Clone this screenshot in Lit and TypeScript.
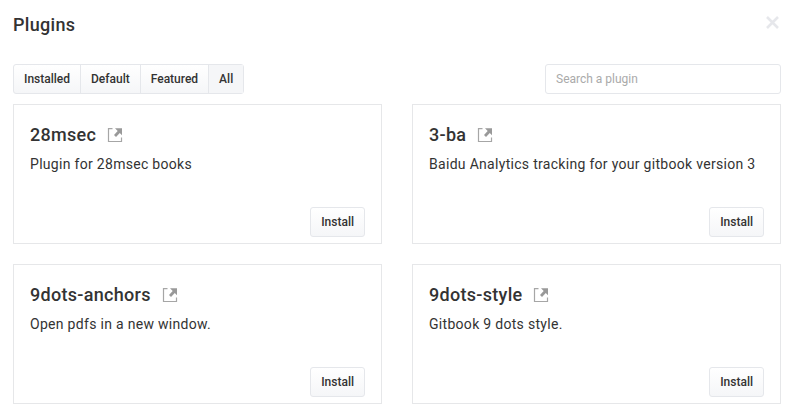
import { LitElement, html, css } from "lit";
import { customElement, property } from "lit/decorators.js";

@customElement("plugin-card")
class PluginCard extends LitElement {
  @property() name = "";
  @property() description = "";
  static styles = css`
    :host { display: flex; flex-direction: column; box-sizing: border-box; height: 140px; border: 1px solid #e6e7e9; padding: 16px; background: #fff; }
    .title { display: flex; align-items: center; font-size: 18px; font-weight: 500; line-height: 28px; letter-spacing: 0.3px; color: #333; }
    svg { margin-left: 10.8px; display: block; }
    .text { margin-top: 5px; font-size: 14px; line-height: 20px; letter-spacing: 0.3px; color: #333; white-space: nowrap; }
    .install { box-sizing: border-box; margin-top: auto; margin-bottom: -10px; align-self: flex-end; height: 30px; padding: 0 10px; border: 1px solid #e5e7eb; border-radius: 3px; background: linear-gradient(#fff, #f5f6f8); font: 500 12px/28px Roboto, sans-serif; color: #333; }
  `;
  render() {
    return html`<div class="title"><span>${this.name}</span>
      <svg width="16" height="16" viewBox="0 0 16 16"><path d="M5.5 1.7H1.5V14.5H14.5V10.5" fill="none" stroke="#a6a6a6" stroke-width="1.2"/><path d="M8 1.2H15V8.2L12.8 6.1L9 9.9L7 7.9L10.7 4Z" fill="#999"/></svg></div>
      <div class="text">${this.description}</div><button class="install">Install</button>`;
  }
}

@customElement("app-root")
class AppRoot extends LitElement {
  static styles = css`
    :host { display: block; box-sizing: border-box; height: 417px; overflow: hidden; background: #fff; font-family: Roboto, sans-serif; color: #333; padding: 0 11px 0 13px; }
    header { display: flex; justify-content: space-between; height: 64px; }
    h1 { margin: 10px 0 0; font-size: 18px; line-height: 30px; font-weight: 500; letter-spacing: 0.3px; }
    .close { margin: 15px 1px 0 0; width: 15px; height: 15px; }
    .bar { display: flex; justify-content: space-between; height: 30px; margin-bottom: 10px; }
    .tabs { display: flex; box-sizing: border-box; border: 1px solid #e5e7eb; border-radius: 3px; background: linear-gradient(#fff, #f5f6f8); }
    .tab { padding: 0 10px; font-size: 12px; line-height: 28px; font-weight: 500; border-right: 1px solid #e5e7eb; }
    .tab:last-child { border: 0; background: #f5f6f8; }
    input { box-sizing: border-box; width: 236px; height: 30px; border: 1px solid #e5e7eb; border-radius: 3px; padding: 0 10px; font: 12px Roboto, sans-serif; letter-spacing: 0; }
    input::placeholder { color: #aaa; }
    .grid { display: grid; grid-template-columns: 369px 369px; gap: 20px 30px; }
  `;
  render() {
    const plugins = [["28msec", "Plugin for 28msec books"], ["3-ba", "Baidu Analytics tracking for your gitbook version 3"], ["9dots-anchors", "Open pdfs in a new window."], ["9dots-style", "Gitbook 9 dots style."]];
    return html`<header><h1>Plugins</h1><svg class="close" viewBox="0 0 15 15"><path d="M2 2L13 13M13 2L2 13" stroke="#e6e7eb" stroke-width="2.6"/></svg></header>
      <div class="bar"><div class="tabs">${["Installed", "Default", "Featured", "All"].map(t => html`<div class="tab">${t}</div>`)}</div><input placeholder="Search a plugin"></div>
      <div class="grid">${plugins.map(p => html`<plugin-card .name=${p[0]} .description=${p[1]}></plugin-card>`)}</div>`;
  }
}
